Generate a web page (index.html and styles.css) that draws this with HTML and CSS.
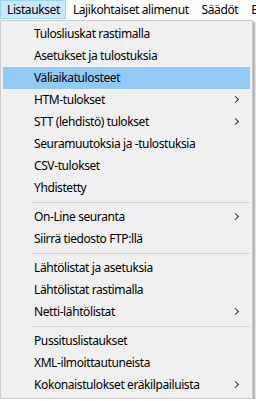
FILE: index.html
```html
<!DOCTYPE html>
<html lang="fi">
<head>
    <meta charset="UTF-8">
    <title>Listaukset</title>
    <link rel="stylesheet" href="styles.css">
</head>
<body>

<div class="menubar">
    <span class="top-item open">Listaukset</span>
    <span class="top-item">Lajikohtaiset alimenut</span>
    <span class="top-item">Säädöt</span>
    <span class="top-item">E</span>
</div>

<ul class="menu">
    <li class="item">Tulosliuskat rastimalla</li>
    <li class="item">Asetukset ja tulostuksia</li>
    <li class="item active">Väliaikatulosteet</li>
    <li class="item sub">HTM-tulokset</li>
    <li class="item sub">STT (lehdistö) tulokset</li>
    <li class="item">Seuramuutoksia ja -tulostuksia</li>
    <li class="item">CSV-tulokset</li>
    <li class="item">Yhdistetty</li>
    <li class="sep"></li>
    <li class="item sub">On-Line seuranta</li>
    <li class="item">Siirrä tiedosto FTP:llä</li>
    <li class="sep"></li>
    <li class="item">Lähtölistat ja asetuksia</li>
    <li class="item">Lähtölistat rastimalla</li>
    <li class="item sub">Netti-lähtölistat</li>
    <li class="sep"></li>
    <li class="item">Pussituslistaukset</li>
    <li class="item">XML-ilmoittautuneista</li>
    <li class="item sub">Kokonaistulokset eräkilpailuista</li>
</ul>

</body>
</html>
```

FILE: styles.css
```css
body {
    margin: 0;
    padding: 0;
    background-color: #fff;
    font-family: "Noto Sans", "Open Sans", sans-serif;
    font-size: 12px;
    letter-spacing: -0.4px;
    color: #000;
    overflow: hidden;
}
.menubar {
    display: flex;
    height: 19px;
    white-space: nowrap;
    background-color: #fff;
    overflow: hidden;
}
.top-item {
    box-sizing: border-box;
    height: 19px;
    line-height: 17px;
    padding: 0 5px 0 6px;
    border: 1px solid transparent;
}
.top-item.open {
    background-color: #cce8ff;
    border-color: #99d1ff;
}
.menu {
    list-style: none;
    box-sizing: border-box;
    width: 253px;
    margin: 1px 0 0 0;
    padding: 2px;
    background-color: #f0f0f0;
    border: 1px solid #ccc;
    box-shadow: 2px 2px 2px rgba(0, 0, 0, 0.35);
}
.item {
    position: relative;
    height: 22px;
    line-height: 22px;
    padding-left: 31px;
    white-space: nowrap;
}
.item.active {
    background-color: #91c9f7;
}
.item.sub::after {
    content: "";
    position: absolute;
    right: 12px;
    top: 8px;
    width: 4px;
    height: 4px;
    border-top: 1px solid #333;
    border-right: 1px solid #333;
    transform: rotate(45deg);
}
.sep {
    height: 1px;
    margin: 3px 0 3px 28px;
    background-color: #d7d7d7;
}
```
